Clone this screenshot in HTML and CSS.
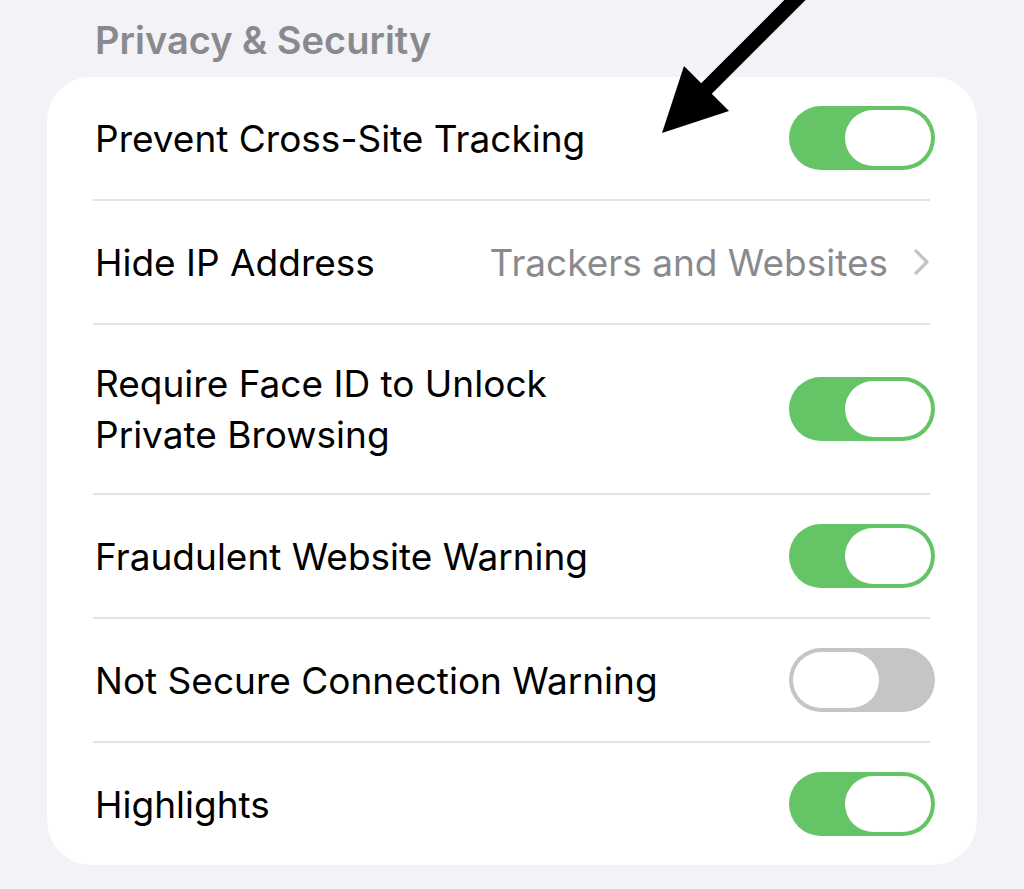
FILE: index.html
```html
<!DOCTYPE html>
<html lang="en">
  <head>
    <meta charset="UTF-8" />
    <meta name="viewport" content="width=device-width, initial-scale=1.0" />
    <title>Privacy &amp; Security</title>
    <link rel="stylesheet" href="styles.css">
  </head>
  <body>
    <div class="page">
      <h2 class="section-title">Privacy &amp; Security</h2>
      <div class="card">
        <div class="row">
          <span class="label">Prevent Cross-Site Tracking</span>
          <span class="toggle on"><span class="knob"></span></span>
        </div>
        <div class="sep"></div>
        <div class="row">
          <span class="label">Hide IP Address</span>
          <span class="value">Trackers and Websites</span>
          <svg class="chevron" width="18" height="28" viewBox="0 0 18 28">
            <path d="M3 3 L14 14 L3 25" fill="none" stroke="#c4c4c7" stroke-width="3.2" stroke-linecap="round" stroke-linejoin="round" />
          </svg>
        </div>
        <div class="sep"></div>
        <div class="row tall">
          <span class="label">Require Face ID to Unlock<br />Private Browsing</span>
          <span class="toggle on"><span class="knob"></span></span>
        </div>
        <div class="sep"></div>
        <div class="row">
          <span class="label">Fraudulent Website Warning</span>
          <span class="toggle on"><span class="knob"></span></span>
        </div>
        <div class="sep"></div>
        <div class="row">
          <span class="label">Not Secure Connection Warning</span>
          <span class="toggle"><span class="knob"></span></span>
        </div>
        <div class="sep"></div>
        <div class="row">
          <span class="label">Highlights</span>
          <span class="toggle on"><span class="knob"></span></span>
        </div>
      </div>
    </div>
    <!-- annotation arrow drawn over the screenshot -->
    <svg class="arrow" width="1024" height="889" viewBox="0 0 1024 889">
      <line x1="802" y1="-7" x2="700" y2="95" stroke="#000" stroke-width="15" />
      <polygon points="662,133 684,66 729,111" fill="#000" />
    </svg>
  </body>
</html>
```

FILE: styles.css
```css
body {
  margin: 0;
  background: #f2f2f7;
  font-family: "Inter", "Noto Sans", sans-serif;
  color: #000;
}

.page {
  padding: 0 47px;
  height: 889px;
  box-sizing: border-box;
}

.section-title {
  margin: 0;
  padding: 17px 0 0 48px;
  height: 60px;
  font-size: 38px;
  line-height: 46px;
  font-weight: 600;
  color: #8a8a8e;
}

.card {
  background: #fff;
  border-radius: 44px;
}

.row {
  display: flex;
  align-items: center;
  min-height: 122px;
  padding: 0 42px 0 48px;
  font-size: 37px;
  line-height: 51px;
}

.row.tall {
  min-height: 168px;
}

.label {
  flex: 1;
}

.value {
  color: #8a8a8e;
  margin-right: 25px;
}

.chevron {
  margin-right: 4px;
}

.sep {
  height: 2px;
  margin: 0 47px 0 46px;
  background: #e2e2e4;
}

.toggle {
  display: flex;
  width: 146px;
  height: 64px;
  padding: 4px;
  box-sizing: border-box;
  border-radius: 32px;
  background: #c5c5c7;
}

.toggle.on {
  background: #65c466;
  justify-content: flex-end;
}

.knob {
  width: 86px;
  height: 56px;
  border-radius: 28px;
  background: #fff;
}

.arrow {
  position: absolute;
  top: 0;
  left: 0;
  pointer-events: none;
}
```
